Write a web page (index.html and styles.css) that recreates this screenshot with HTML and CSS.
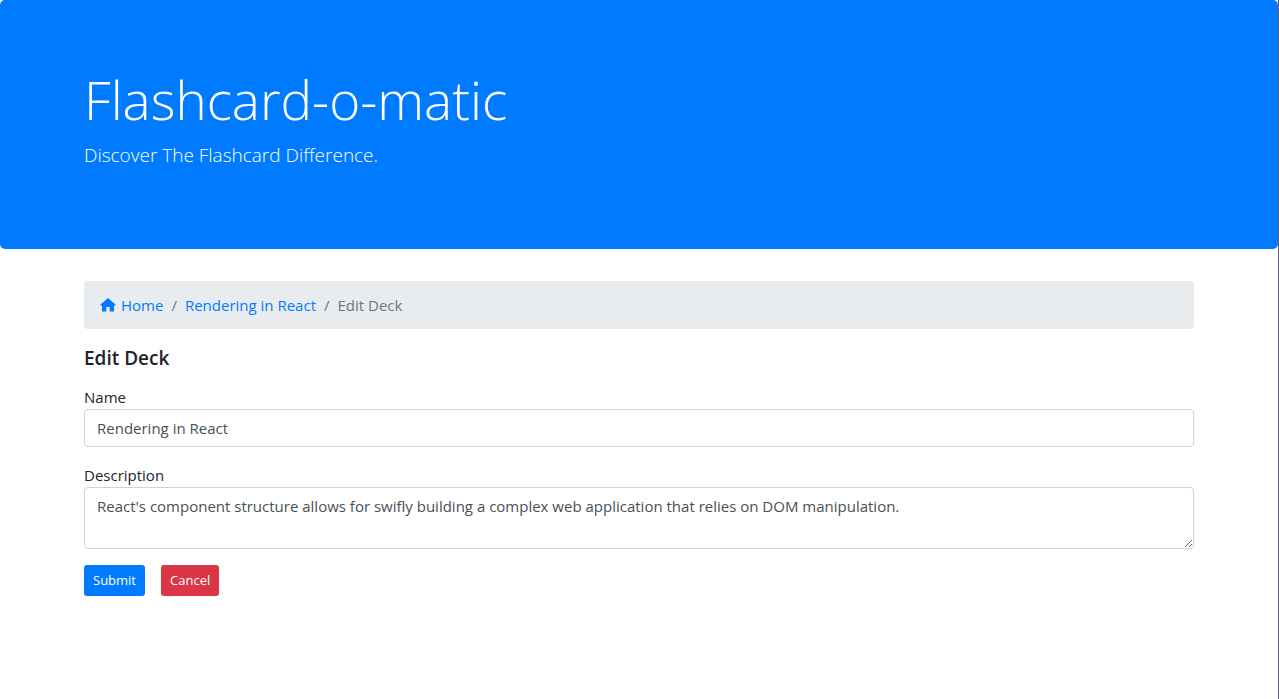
FILE: index.html
```html
<!DOCTYPE html>
<html lang="en">
<head>
<meta charset="utf-8">
<meta name="viewport" content="width=device-width, initial-scale=1">
<title>Flashcard-o-matic</title>
<link rel="stylesheet" href="styles.css">
</head>
<body>
<header class="banner">
  <div class="container">
    <h1 class="banner-title">Flashcard-o-matic</h1>
    <p class="banner-lead">Discover The Flashcard Difference.</p>
  </div>
</header>
<main class="container">
  <nav aria-label="breadcrumb">
    <ol class="breadcrumb">
      <li class="breadcrumb-item"><a class="home-link" href="#"><svg class="home-icon" viewBox="0 0 16 16" aria-hidden="true"><path fill="currentColor" d="M8 1 15.500 7.600V8.500H14V14.500H9.700V10H6.300V14.500H2V8.500H.5V7.600z"/></svg>Home</a></li>
      <li class="breadcrumb-item"><a href="#">Rendering in React</a></li>
      <li class="breadcrumb-item current" aria-current="page">Edit Deck</li>
    </ol>
  </nav>
  <h2 class="form-title">Edit Deck</h2>
  <form class="deck-form">
    <div class="field">
      <label for="name">Name</label>
      <input class="control" id="name" type="text" value="Rendering in React">
    </div>
    <div class="field">
      <label for="description">Description</label>
      <textarea class="control" id="description" rows="2">React's component structure allows for swifly building a complex web application that relies on DOM manipulation.</textarea>
    </div>
    <div class="actions">
      <button class="button submit" type="submit">Submit</button>
      <button class="button cancel" type="button">Cancel</button>
    </div>
  </form>
</main>
</body>
</html>
```
FILE: styles.css
```css
* { box-sizing: border-box; }

body {
  margin: 0;
  min-height: 100vh;
  border-right: 1px solid #5f5d75;
  background: #fff;
  color: #212529;
  font-family: "Segoe UI", "Open Sans", "Noto Sans", sans-serif;
  font-size: 15px;
  line-height: 24px;
}

.container {
  max-width: 1140px;
  margin: 0 auto;
  padding: 0 15px;
}

.banner {
  margin-bottom: 32px;
  padding: 64px 0 79px;
  border-radius: 5px;
  background: #007bff;
  color: #fff;
}

.banner-title {
  margin: 0 0 4px;
  font-size: 53px;
  font-weight: 300;
  line-height: 72px;
}

.banner-lead {
  margin: 0;
  font-size: 19px;
  font-weight: 300;
  line-height: 30px;
}

.breadcrumb {
  display: flex;
  flex-wrap: wrap;
  margin: 0 0 16px;
  padding: 12px 16px;
  border-radius: 4px;
  background: #e9ecef;
  list-style: none;
}

.breadcrumb-item { display: flex; }

.breadcrumb-item + .breadcrumb-item::before {
  content: "/";
  padding: 0 8px;
  color: #6c757d;
}

.breadcrumb a {
  color: #007bff;
  text-decoration: none;
}

.breadcrumb .current { color: #6c757d; }

.breadcrumb .home-link {
  display: flex;
  align-items: center;
  gap: 5px;
}

.home-icon {
  width: 16px;
  height: 16px;
}

.form-title {
  margin: 0 0 14px;
  font-size: 19px;
  font-weight: 600;
  line-height: 26px;
}

.deck-form {
  display: flex;
  flex-direction: column;
  gap: 16px;
}

.field {
  display: flex;
  flex-direction: column;
}

.control {
  width: 100%;
  padding: 6px 12px;
  border: 1px solid #ced4da;
  border-radius: 4px;
  background: #fff;
  color: #495057;
  font: inherit;
}

input.control { height: 38px; }

textarea.control {
  height: 62px;
  resize: vertical;
}

.actions {
  display: flex;
  gap: 16px;
}

.button {
  padding: 4px 8px;
  border: 1px solid transparent;
  border-radius: 3px;
  color: #fff;
  font-family: inherit;
  font-size: 13px;
  line-height: 21px;
  cursor: pointer;
}

.submit { background: #007bff; }
.cancel { background: #dc3545; }
```
